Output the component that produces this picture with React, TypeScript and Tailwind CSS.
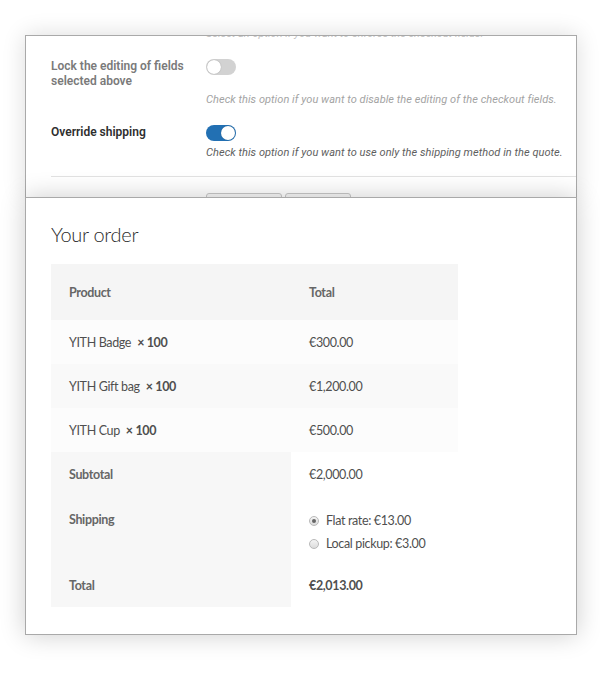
import React from "react";

const sysFont = { fontFamily: "Roboto, 'Liberation Sans', sans-serif" };
const sansFont = { fontFamily: "Lato, 'Open Sans', sans-serif" };

function Toggle({ on }: { on: boolean }) {
  return (
    <div
      className={
        on
          ? "flex h-[16px] w-[30px] items-center justify-end rounded-full bg-[#2270b3] px-[1px]"
          : "flex h-[16px] w-[30px] items-center justify-start rounded-full bg-[#d2d2d2] px-[1px]"
      }
    >
      <div className="h-[14px] w-[14px] rounded-full bg-white shadow-[0_0_1px_rgba(0,0,0,0.35)]" />
    </div>
  );
}

function Radio({ checked }: { checked: boolean }) {
  return (
    <div className="flex h-[10px] w-[10px] items-center justify-center rounded-full border border-[#b9b9b9] bg-gradient-to-b from-[#f4f4f4] to-[#dcdcdc]">
      {checked && <div className="h-[4px] w-[4px] rounded-full bg-[#666]" />}
    </div>
  );
}

export default function App() {
  const rows = [
    { name: "YITH Badge", total: "€300.00", bg: "bg-[#fcfcfc]" },
    { name: "YITH Gift bag", total: "€1,200.00", bg: "bg-[#f9f9f9]" },
    { name: "YITH Cup", total: "€500.00", bg: "bg-[#fcfcfc]" },
  ];
  return (
    <div className="min-h-[674px] w-[600px] bg-white pl-[25px] pt-[35px]">
      {/* settings panel (behind) */}
      <div
        className="h-[162px] w-[552px] overflow-hidden border border-b-0 border-[#a9a9a9] bg-white shadow-[0_0_22px_rgba(0,0,0,0.14)]"
        style={sysFont}
      >
        <div className="-mt-[10px] pl-[180px] text-[11px] italic leading-[16px] text-[#c2c2c2]">
          Select an option if you want to enforce the checkout fields.
        </div>
        <div className="mt-[17px] grid grid-cols-[155px_1fr] pl-[25px]">
          <div className="w-[142px] text-[12px] font-semibold leading-[15px] text-[#7a7a7a]">
            Lock the editing of fields selected above
          </div>
          <div>
            <Toggle on={false} />
          </div>
          <div />
          <div className="mt-[3px] text-[11px] italic leading-[16px] tracking-[0.05px] text-[#a3a3a3]">
            Check this option if you want to disable the editing of the checkout fields.
          </div>
          <div className="mt-[17px] text-[12px] font-semibold leading-[15px] text-[#2e2e2e]">
            Override shipping
          </div>
          <div className="mt-[17px]">
            <Toggle on={true} />
          </div>
          <div />
          <div className="mt-[4px] text-[11px] italic leading-[16px] tracking-[0.05px] text-[#5e5e5e]">
            Check this option if you want to use only the shipping method in the quote.
          </div>
        </div>
        <div className="ml-[25px] mt-[15px] h-[1px] bg-[#e2e2e2]" />
        <div className="ml-[180px] mt-[16px] flex gap-[3px]">
          <div className="h-[28px] w-[76px] rounded-[3px] border border-[#c8c8c8] bg-[#f7f7f7]" />
          <div className="h-[28px] w-[66px] rounded-[3px] border border-[#c8c8c8] bg-[#f7f7f7]" />
        </div>
      </div>

      {/* order card (front) */}
      <div
        className="relative z-10 h-[438px] w-[552px] border border-[#a9a9a9] bg-white pl-[25px] pt-[22px] shadow-[0_0_24px_rgba(0,0,0,0.2)]"
        style={sansFont}
      >
        <h2 className="text-[20px] font-light leading-[28px] tracking-[-0.3px] text-[#2b2b2b]">Your order</h2>
        <div className="mt-[16px] w-[407px] text-[12.5px] leading-[22px] tracking-[-0.35px] text-[#4f4f4f]">
          <div className="grid h-[56px] grid-cols-[240px_167px] items-center bg-[#f5f5f5] pt-[1px] font-bold text-[#666]">
            <div className="px-[18px]">Product</div>
            <div className="px-[18px]">Total</div>
          </div>
          {rows.map((r) => (
            <div key={r.name} className={"grid h-[44px] grid-cols-[240px_167px] items-center pt-[1px] " + r.bg}>
              <div className="px-[18px]">
                {r.name}
                <span className="ml-[6px] font-bold">× 100</span>
              </div>
              <div className="px-[18px]">{r.total}</div>
            </div>
          ))}
          <div className="grid grid-cols-[240px_167px]">
            <div className="flex h-[45px] items-center bg-[#f7f7f7] px-[18px] pt-[1px] font-bold text-[#666]">Subtotal</div>
            <div className="flex h-[45px] items-center px-[18px] pt-[1px]">€2,000.00</div>
            <div className="h-[67px] bg-[#f7f7f7] px-[18px] pt-[12px] font-bold text-[#666]">Shipping</div>
            <div className="h-[67px] px-[18px] pt-[12px]">
              <div className="flex items-center gap-[7px] leading-[23px]">
                <Radio checked={true} />
                <span>Flat rate: €13.00</span>
              </div>
              <div className="flex items-center gap-[7px] leading-[23px]">
                <Radio checked={false} />
                <span>Local pickup: €3.00</span>
              </div>
            </div>
            <div className="flex h-[43px] items-center bg-[#f7f7f7] px-[18px] pt-[1px] font-bold text-[#666]">Total</div>
            <div className="flex h-[43px] items-center px-[18px] pt-[1px] font-bold">€2,013.00</div>
          </div>
        </div>
      </div>
    </div>
  );
}
